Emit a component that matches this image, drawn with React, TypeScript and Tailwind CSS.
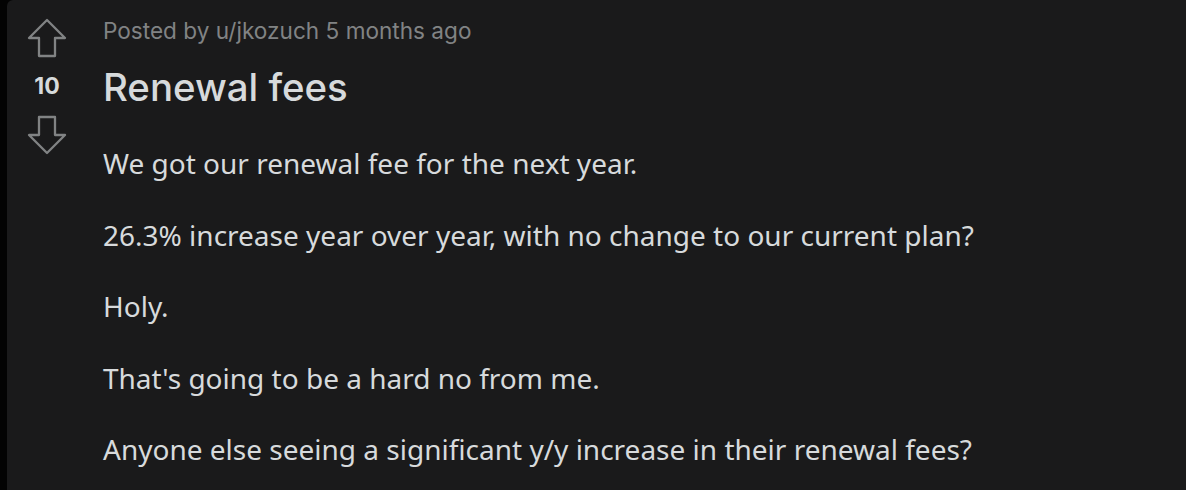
import React from "react";

const UpArrow = () => (
  <svg width="40" height="40" viewBox="0 0 40 40" fill="none">
    <path
      d="M20 2 L2 20 L12 20 L12 38 L28 38 L28 20 L38 20 Z"
      stroke="#818384"
      strokeWidth="2.3"
      strokeLinejoin="round"
    />
  </svg>
);

const DownArrow = () => (
  <svg width="40" height="40" viewBox="0 0 40 40" fill="none">
    <path
      d="M20 38 L2 20 L12 20 L12 2 L28 2 L28 20 L38 20 Z"
      stroke="#818384"
      strokeWidth="2.3"
      strokeLinejoin="round"
    />
  </svg>
);

const paragraphs = [
  "We got our renewal fee for the next year.",
  "26.3% increase year over year, with no change to our current plan?",
  "Holy.",
  "That's going to be a hard no from me.",
  "Anyone else seeing a significant y/y increase in their renewal fees?",
];

export default function App() {
  return (
    <div className="flex h-[490px] w-full overflow-hidden bg-[#030303] pl-[7px]">
      <div className="flex flex-1 rounded-tl-[6px] bg-[#1a1a1b]">
        <div className="flex w-[80px] flex-col items-center pt-[18px]">
          <UpArrow />
          <div className="h-[57px] text-center font-['Inter',sans-serif] text-[23px] font-bold leading-[57px] text-[#d7dadc]">
            10
          </div>
          <DownArrow />
        </div>
        <div className="flex flex-1 flex-col pl-[16px] pt-[17px]">
          <div className="font-['Inter',sans-serif] text-[22.6px] leading-[28px] text-[#818384]">
            Posted by u/jkozuch 5 months ago
          </div>
          <h1 className="mt-[20px] font-['Inter',sans-serif] text-[38.4px] font-medium leading-[44px] text-[#d7dadc]">
            Renewal fees
          </h1>
          <div className="mt-[34px] flex flex-col gap-[31.5px] font-['Noto_Sans',sans-serif] text-[28px] leading-[40px] text-[#d7dadc]">
            {paragraphs.map((p) => (
              <p key={p}>{p}</p>
            ))}
          </div>
        </div>
      </div>
    </div>
  );
}
